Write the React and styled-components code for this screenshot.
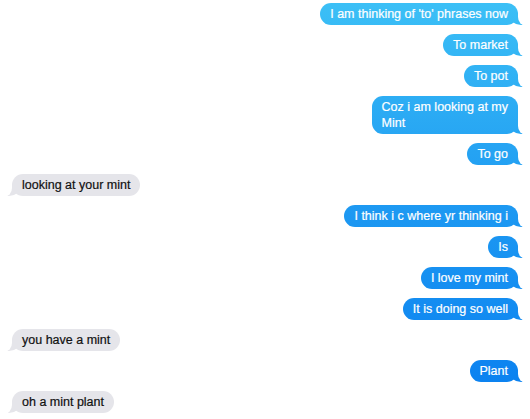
import React from "react";
import styled, { createGlobalStyle } from "styled-components";

const GlobalStyle = createGlobalStyle`
  html, body {
    margin: 0;
    padding: 0;
    background: #ffffff;
  }
`;

const Thread = styled.div`
  display: flex;
  flex-direction: column;
  gap: 9px;
  padding: 3px 12px 0 12px;
  font-family: "Liberation Sans", Arial, sans-serif;
  font-size: 12.5px;
`;

const Row = styled.div`
  display: flex;
  justify-content: ${props => (props.mine ? "flex-end" : "flex-start")};
`;

const Bubble = styled.div`
  position: relative;
  padding: 3px 10px;
  line-height: 16px;
  border-radius: 11px;
  color: ${props => (props.mine ? "#ffffff" : "#111111")};
  background: ${props =>
    props.mine
      ? "linear-gradient(to bottom, #3cc0f6 0px, #1e9af2 200px, #0a80f0 400px)"
      : "#e5e5ea"};
  background-attachment: ${props => (props.mine ? "fixed" : "scroll")};
  white-space: nowrap;
  -webkit-text-stroke: 0.2px currentColor;

  &::before {
    content: "";
    position: absolute;
    bottom: 0;
    ${props => (props.mine ? "right: -5px;" : "left: -5px;")}
    width: 14px;
    height: 12px;
    background: inherit;
    background-attachment: inherit;
    ${props =>
      props.mine
        ? "border-bottom-left-radius: 12px 10px;"
        : "border-bottom-right-radius: 12px 10px;"}
    z-index: 0;
  }

  &::after {
    content: "";
    position: absolute;
    bottom: -1px;
    ${props => (props.mine ? "right: -9px;" : "left: -9px;")}
    width: 9px;
    height: 14px;
    background: #ffffff;
    ${props =>
      props.mine
        ? "border-bottom-left-radius: 8px 9px;"
        : "border-bottom-right-radius: 8px 9px;"}
    z-index: 1;
  }
`;

const Text = styled.span`
  position: relative;
  z-index: 2;
`;

const messages = [
  { mine: true, text: "I am thinking of 'to' phrases now" },
  { mine: true, text: "To market" },
  { mine: true, text: "To pot" },
  { mine: true, text: ["Coz i am looking at my", "Mint"] },
  { mine: true, text: "To go" },
  { mine: false, text: "looking at your mint" },
  { mine: true, text: "I think i c where yr thinking i" },
  { mine: true, text: "Is" },
  { mine: true, text: "I love my mint" },
  { mine: true, text: "It is doing so well" },
  { mine: false, text: "you have a mint" },
  { mine: true, text: "Plant" },
  { mine: false, text: "oh a mint plant" }
];

const App = () => (
  <>
    <GlobalStyle />
    <Thread>
      {messages.map((m, i) => (
        <Row key={i} mine={m.mine}>
          <Bubble mine={m.mine}>
            <Text>
              {Array.isArray(m.text)
                ? m.text.map((line, j) => (
                    <React.Fragment key={j}>
                      {j > 0 && <br />}
                      {line}
                    </React.Fragment>
                  ))
                : m.text}
            </Text>
          </Bubble>
        </Row>
      ))}
    </Thread>
  </>
);

export default App;
